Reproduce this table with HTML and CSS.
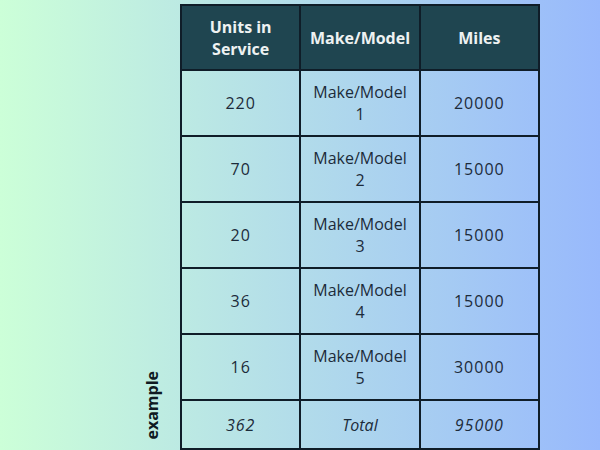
FILE: index.html
```html
<!DOCTYPE html>
<html>
<head>
<meta charset="utf-8">
<link rel="stylesheet" href="styles.css">
</head>
<body>
<div class="page">
  <div class="side"><span class="label">example</span></div>
  <table class="grid">
    <thead>
      <tr><th>Units in<br>Service</th><th>Make/Model</th><th>Miles</th></tr>
    </thead>
    <tbody>
      <tr><td class="num">220</td><td>Make/Model<br>1</td><td class="num">20000</td></tr>
      <tr><td class="num">70</td><td>Make/Model<br>2</td><td class="num">15000</td></tr>
      <tr><td class="num">20</td><td>Make/Model<br>3</td><td class="num">15000</td></tr>
      <tr><td class="num">36</td><td>Make/Model<br>4</td><td class="num">15000</td></tr>
      <tr><td class="num">16</td><td>Make/Model<br>5</td><td class="num">30000</td></tr>
      <tr class="total"><td class="num">362</td><td>Total</td><td class="num">95000</td></tr>
    </tbody>
  </table>
</div>
</body>
</html>
```
FILE: styles.css
```css
html, body {
  margin: 0;
  padding: 0;
  width: 600px;
  height: 450px;
  overflow: hidden;
}
body {
  background: linear-gradient(to right, #ccffd8 0%, #98b9fc 100%);
  font-family: "Open Sans", "Noto Sans", sans-serif;
  color: #1c2b3a;
}
.page {
  display: flex;
  align-items: flex-start;
  padding: 4px 0 0 140px;
}
.side {
  width: 40px;
  height: 445px;
  display: flex;
  align-items: flex-end;
  justify-content: flex-start;
}
.label {
  writing-mode: vertical-rl;
  transform: rotate(180deg);
  font-weight: 700;
  font-size: 16px;
  color: #0f1a22;
  margin-bottom: 9px;
  margin-left: 1px;
}
.grid {
  border-collapse: collapse;
  width: 360px;
  table-layout: fixed;
}
.grid th, .grid td {
  border: 2px solid #0f1d28;
  text-align: center;
  vertical-align: middle;
  padding: 0;
  font-size: 16px;
  line-height: 22px;
  box-sizing: border-box;
}
.grid th {
  background: #1f4550;
  color: #eef2f2;
  font-weight: 700;
  height: 65px;
}
.grid td {
  height: 66px;
}
.grid td.num {
  letter-spacing: 1px;
}
.grid .total td {
  font-style: italic;
  height: 49px;
}
```
